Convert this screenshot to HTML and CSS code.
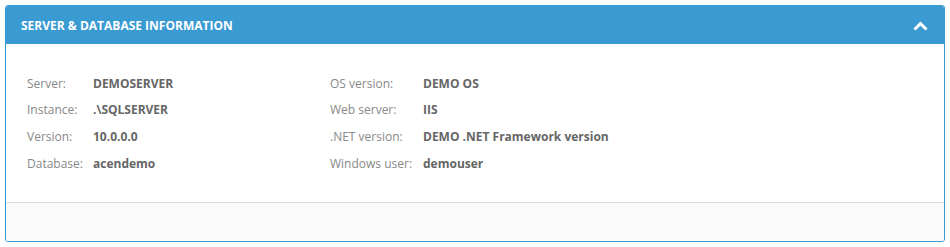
FILE: index.html
```html
<!DOCTYPE html>
<html lang="en">
<head>
    <meta charset="UTF-8">
    <title>Server &amp; Database Information</title>
    <link rel="stylesheet" href="styles.css">
</head>
<body>
    <div class="panel">
        <div class="panel-heading">
            <h2>Server &amp; Database Information</h2>
            <svg class="toggle" width="15" height="10" viewBox="0 0 15 10">
                <path d="M1.5 8.5 L7.5 2.5 L13.5 8.5" fill="none" stroke="#fff" stroke-width="3"/>
            </svg>
        </div>
        <div class="panel-body">
            <div class="info-col first">
                <span class="label">Server:</span><span class="value">DEMOSERVER</span>
                <span class="label">Instance:</span><span class="value">.\SQLSERVER</span>
                <span class="label">Version:</span><span class="value">10.0.0.0</span>
                <span class="label">Database:</span><span class="value">acendemo</span>
            </div>
            <div class="info-col second">
                <span class="label">OS version:</span><span class="value">DEMO OS</span>
                <span class="label">Web server:</span><span class="value">IIS</span>
                <span class="label">.NET version:</span><span class="value">DEMO .NET Framework version</span>
                <span class="label">Windows user:</span><span class="value">demouser</span>
            </div>
        </div>
        <div class="panel-footer"></div>
    </div>
</body>
</html>
```

FILE: styles.css
```css
body {
    margin: 5px;
    font-family: 'Open Sans', 'Liberation Sans', sans-serif;
    background-color: #fff;
}
.panel {
    width: 938px;
    border: 1px solid #3a9ad2;
    border-radius: 3px;
    overflow: hidden;
}
.panel-heading {
    display: flex;
    justify-content: space-between;
    align-items: center;
    height: 38px;
    padding: 0 16px 0 15px;
    background-color: #3a9ad2;
}
.panel-heading h2 {
    margin: 0;
    font-size: 12px;
    font-weight: bold;
    color: #fff;
    text-transform: uppercase;
}
.toggle {
    margin-top: 2px;
}
.panel-body {
    display: grid;
    grid-template-columns: 303px 1fr;
    padding: 26px 21px 23px;
    height: 109px;
}
.info-col {
    display: grid;
    align-content: start;
    grid-auto-rows: 26.67px;
    align-items: center;
    font-size: 12px;
}
.info-col.first {
    grid-template-columns: 66px 1fr;
}
.info-col.second {
    grid-template-columns: 93px 1fr;
}
.label {
    color: #888;
}
.value {
    color: #666;
    font-weight: bold;
}
.panel-footer {
    height: 38px;
    border-top: 1px solid #ddd;
    background-color: #fafafa;
}
```
